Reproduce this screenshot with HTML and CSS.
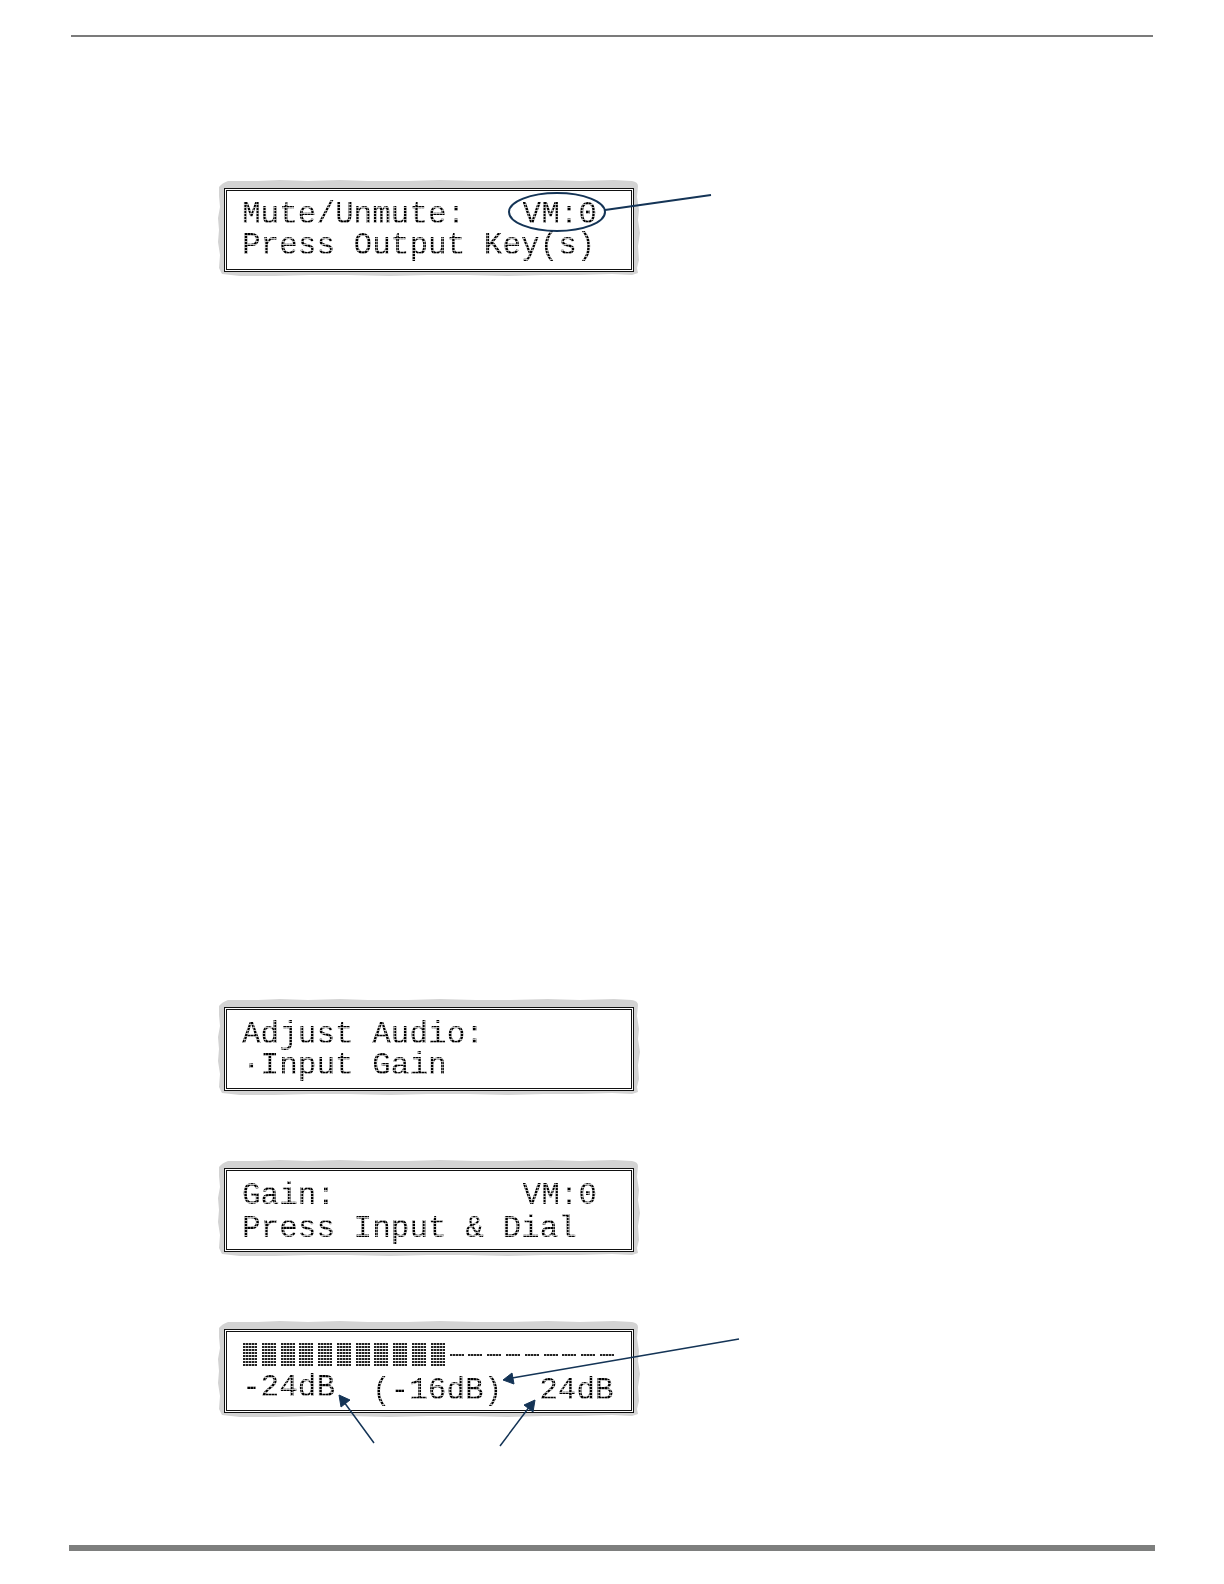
FILE: index.html
```
<!DOCTYPE html>
<html lang="en">
<head>
  <title>Front Panel Displays</title>
  <meta charset="UTF-8">
  <meta name="viewport" content="width=device-width, initial-scale=1.0">
  <link rel="stylesheet" href="styles.css">
</head>
<body>
  <header></header>

  <!-- torn paper edge, shared by all displays -->
  <svg class="defs" aria-hidden="true">
    <symbol id="torn" viewBox="0 0 422 97">
      <path fill="#d3d3d3" d="M1 7 Q4 3 10 1 L40 1 L62 0 L90 1 L122 0 L150 1 L190 1 L222 0 L258 1 L292 1 L330 0 L362 1 L396 0 L414 1 Q420 2 420 6 L419 17 L421 30 L420 40 L422 53 L420 66 L421 80 L419 88 L420 93 L414 95 L394 94 L360 95 L326 95 L290 96 L250 95 L210 95 L172 96 L130 95 L92 95 L56 96 L22 96 L4 94 L1 88 L2 75 L0 62 L1 50 L0 38 L2 27 L1 16 Z"/>
    </symbol>
  </svg>

  <main>
    <figure class="display mute">
      <svg class="torn" aria-hidden="true"><use href="#torn"/></svg>
      <div class="lcd">
        <p class="row"><span>Mute/Unmute:</span><span class="vm">VM:0</span></p>
        <p class="row"><span>Press Output Key(s)</span></p>
      </div>
      <svg class="callout thick" aria-hidden="true">
        <ellipse cx="333" cy="24" rx="48" ry="19"/>
        <path d="M381 22 L487 7"/>
      </svg>
    </figure>

    <figure class="display adjust">
      <svg class="torn" aria-hidden="true"><use href="#torn"/></svg>
      <div class="lcd">
        <p class="row"><span>Adjust Audio:</span></p>
        <p class="row"><span>·Input Gain</span></p>
      </div>
    </figure>

    <figure class="display gain">
      <svg class="torn" aria-hidden="true"><use href="#torn"/></svg>
      <div class="lcd">
        <p class="row"><span>Gain:</span><span class="vm">VM:0</span></p>
        <p class="row"><span>Press Input &amp; Dial</span></p>
      </div>
    </figure>

    <figure class="display level">
      <svg class="torn" aria-hidden="true"><use href="#torn"/></svg>
      <div class="lcd">
        <div class="meter" role="img" aria-label="Gain level">
          <i class="on"></i><i class="on"></i><i class="on"></i><i class="on"></i><i class="on"></i><i class="on"></i>
          <i class="on"></i><i class="on"></i><i class="on"></i><i class="on"></i><i class="on"></i>
          <i></i><i></i><i></i><i></i><i></i><i></i><i></i><i></i><i></i>
        </div>
        <p class="row scale"><span>-24dB</span><span class="low">(-16dB)</span><span class="low">24dB</span></p>
      </div>
      <svg class="callout" aria-hidden="true">
        <path d="M150 114 L120 73 M276 117 L306 77 M515 10 L288 49"/>
        <path class="head" d="M115 66 L126 71 L117 78 Z M311 71 L309 83 L300 76 Z M279 51 L288 44 L290 55 Z"/>
      </svg>
    </figure>
  </main>

  <footer></footer>
</body>
</html>
```
FILE: styles.css
```
* {
  box-sizing: border-box;
}

body {
  margin: 0;
  padding: 35px 69px 33px;
  min-height: 100vh;
  display: flex;
  flex-direction: column;
  background: #fff;
  color: #222;
  font-family: "Liberation Mono", monospace;
}

header {
  height: 2px;
  margin: 0 2px;
  background: #7b7b7b;
}

footer {
  height: 6px;
  margin-top: auto;
  background: #7e7f7e;
}

main {
  padding-left: 155px;
}

.defs {
  display: none;
}

.display {
  position: relative;
  width: 410px;
  margin: 0;
}

.mute {
  margin-top: 151px;
}

.adjust {
  margin-top: 735px;
}

.gain,
.level {
  margin-top: 77px;
}

.torn {
  position: absolute;
  top: -8px;
  left: -6px;
  width: 422px;
  height: 97px;
}

.lcd {
  position: relative;
  height: 84px;
  padding: 8px 15px;
  border: 3px double #111;
  background: #fff;
}

.row {
  display: flex;
  margin: 0;
  font-size: 31px;
  line-height: 31px;
  white-space: pre;
}

/* dot matrix look: the letters are filled with a dot pattern */
.row span {
  background:
    linear-gradient(transparent 2px, rgba(255, 255, 255, 0.7) 2px) 0 0 / 3px 3px,
    linear-gradient(90deg, #000 2px, #555 2px) 0 0 / 3px 3px;
  -webkit-background-clip: text;
  background-clip: text;
  -webkit-text-fill-color: transparent;
}

.row .vm {
  margin-left: auto;
  margin-right: 19px;
}

.adjust .lcd {
  padding-top: 9px;
}

.gain .row {
  line-height: 33px;
}

.meter {
  display: flex;
  justify-content: space-between;
  height: 32px;
  padding: 3px 2px 0 1px;
}

.meter i {
  width: 14px;
  height: 2px;
  margin-top: 11px;
  background: linear-gradient(90deg, #222 2px, #999 2px) 0 0 / 3px 3px;
}

.meter .on {
  height: 23px;
  margin-top: 0;
  background:
    linear-gradient(transparent 2px, #fff 2px) 0 0 / 3px 3px,
    linear-gradient(90deg, #222 2px, #999 2px) 0 0 / 3px 3px;
}

.scale {
  gap: 37px;
}

.low {
  margin-top: 3px;
}

.callout {
  position: absolute;
  top: 0;
  left: 0;
  width: 100%;
  height: 100%;
  overflow: visible;
  fill: none;
  stroke: #143456;
  stroke-width: 1.5;
}

.thick {
  stroke-width: 2;
}

.head {
  fill: #143456;
  stroke-width: 1;
}
```
